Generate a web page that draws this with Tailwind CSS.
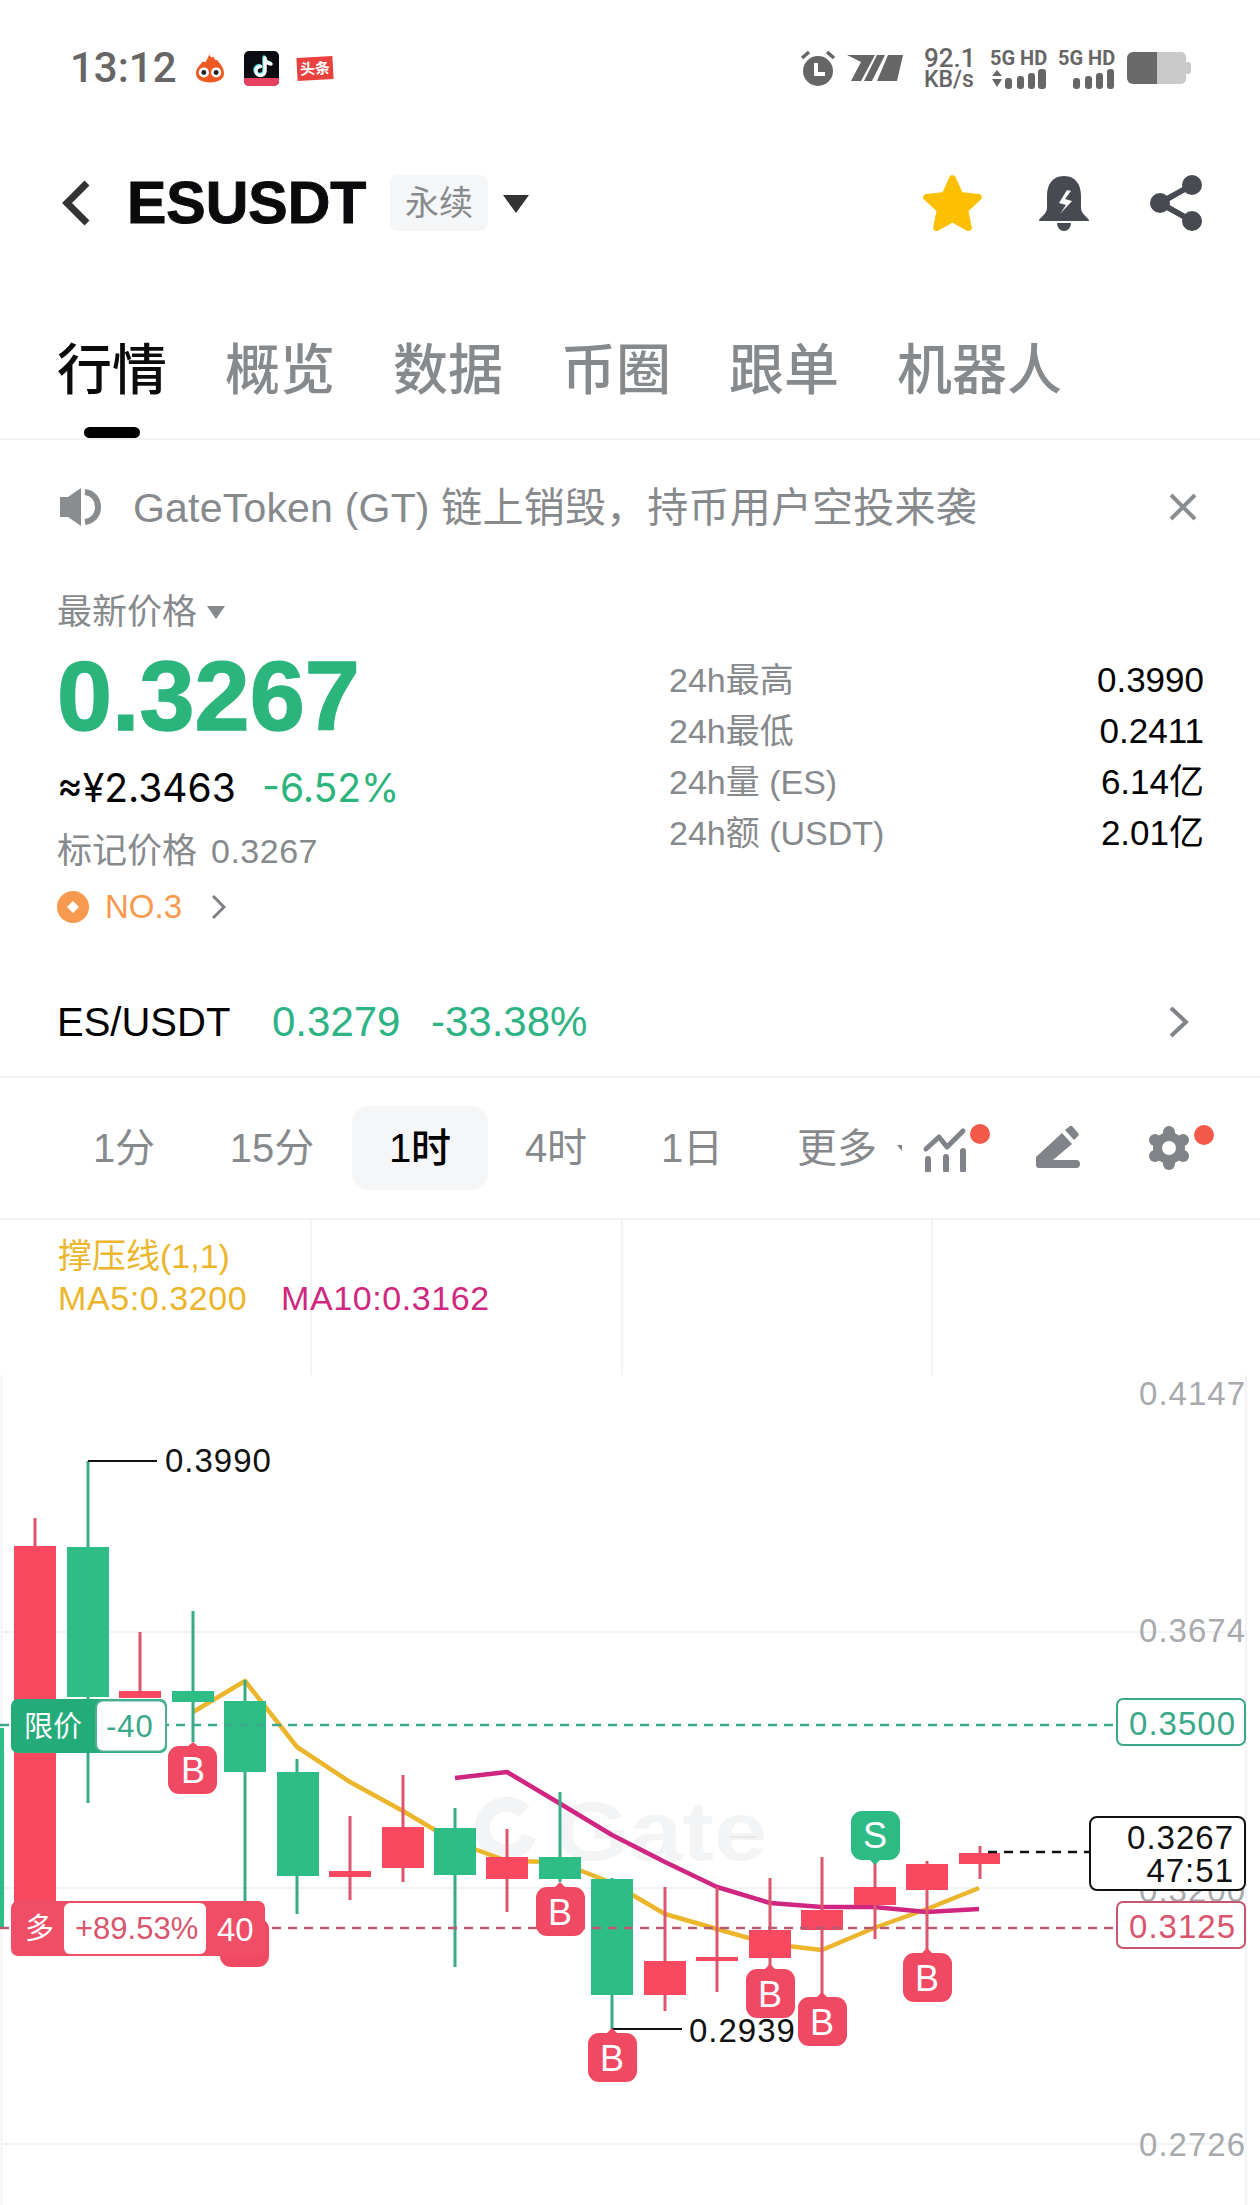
<!DOCTYPE html>
<html lang="zh-CN">
<head>
  <meta charset="UTF-8" />
  <meta name="viewport" content="width=device-width, initial-scale=1.0" />
  <title>ESUSDT 永续</title>
  <script src="https://cdn.jsdelivr.net/npm/@tailwindcss/browser@4"></script>
</head>
<body class="bg-white w-[1260px] h-[2205px] overflow-hidden font-['Liberation_Sans','Noto_Sans_CJK_SC',sans-serif]">
  <!-- status bar -->
  <div class="h-[136px] flex items-center text-[#666]">
    <span class="ml-[70px] w-[102px] text-[42px] leading-none font-medium font-['Roboto','Noto_Sans_CJK_SC',sans-serif] whitespace-nowrap">13:12</span>
    <svg class="ml-[24px] w-[28px] h-[29px]" viewBox="1 2 25 25">
      <path d="M13 2c1 3 2 3 4 2 0 2 1 3 3 3 3 4 6 7 6 12 0 5-5 8-12.500 8S1 24 1 19c0-6 4-7 6-11 1 1 2 1 3 0 1-2 2-4 3-6z" fill="#ef5a22"/>
      <circle cx="8" cy="18" r="4.500" fill="#fff"/><circle cx="19" cy="18" r="4.500" fill="#fff"/>
      <circle cx="8" cy="18" r="2.200" fill="#222"/><circle cx="19" cy="18" r="2.200" fill="#222"/>
    </svg>
    <svg class="ml-[20px] w-[35px] h-[35px]" viewBox="0 0 35 35">
      <rect width="35" height="35" rx="5" fill="#0b0b12"/>
      <path d="M0 27h35v3a5 5 0 0 1-5 5H5a5 5 0 0 1-5-5z" fill="#e8415f"/>
      <g fill="none" stroke-width="3.500" stroke-linecap="round">
        <path d="M20 6v13a4.500 4.500 0 1 1-4.500-4.500M20 7c1 3 3 4.500 6 5" stroke="#3ce0e0"/>
        <path d="M21 7v13a4.500 4.500 0 1 1-4.500-4.500M21 8c1 3 3 4.500 6 5" stroke="#fff"/>
      </g>
    </svg>
    <span class="ml-[18px] w-[36px] h-[23px] bg-[#e8413e] -rotate-3 text-white text-[15px] leading-[23px] font-bold text-center whitespace-nowrap">头条</span>

    <svg class="ml-[467px] w-[36px] h-[36px]" viewBox="0 0 36 36">
      <circle cx="18" cy="21" r="15" fill="#666"/>
      <path d="M2 8l7-6M27 2l7 6" stroke="#666" stroke-width="3.500"/>
      <path d="M16 13v11h9" fill="none" stroke="#fff" stroke-width="4"/>
    </svg>
    <svg class="ml-[11px] w-[56px] h-[26px]" viewBox="0 0 56 26">
      <path d="M0 0h28L14 26H4l10-19zM30 0h8L25 26h-8zM41 0h15l-6 26H30z" fill="#666"/>
    </svg>
    <div class="ml-[21px] w-[50px] flex flex-col font-medium font-['Roboto',sans-serif] whitespace-nowrap">
      <span class="text-[26px] leading-[23px]">92.1</span>
      <span class="text-[23px] leading-[20px]">KB/s</span>
    </div>
    <div class="ml-[16px] w-[57px] flex flex-col">
      <span class="text-[20px] leading-[20px] font-bold font-['Roboto',sans-serif] whitespace-nowrap">5G HD</span>
      <svg class="w-[57px] h-[20px] mt-[1px]" viewBox="0 0 57 20" fill="#666">
        <path d="M2 7l5-6 5 6zM2 10l5 8 5-8z"/>
        <rect x="15" y="9" width="7" height="11" rx="3"/><rect x="27" y="7" width="7" height="13" rx="3"/><rect x="38" y="4" width="7" height="16" rx="3"/><rect x="48" y="0" width="8" height="20" rx="3"/>
      </svg>
    </div>
    <div class="ml-[11px] w-[57px] flex flex-col">
      <span class="text-[20px] leading-[20px] font-bold font-['Roboto',sans-serif] whitespace-nowrap">5G HD</span>
      <svg class="w-[57px] h-[20px] mt-[1px]" viewBox="0 0 57 20" fill="#666">
        <rect x="15" y="9" width="7" height="11" rx="3"/><rect x="27" y="7" width="7" height="13" rx="3"/><rect x="38" y="4" width="7" height="16" rx="3"/><rect x="49" y="0" width="7" height="20" rx="3"/>
      </svg>
    </div>
    <svg class="ml-[12px] w-[64px] h-[32px]" viewBox="0 0 64 32">
      <path d="M30 0h24a5 5 0 0 1 5 5v22a5 5 0 0 1-5 5H30z" fill="#c9c9c9"/>
      <path d="M59 10h2a3 3 0 0 1 3 3v6a3 3 0 0 1-3 3h-2z" fill="#c9c9c9"/>
      <path d="M30 0H6a6 6 0 0 0-6 6v20a6 6 0 0 0 6 6h24z" fill="#6a6a6a"/>
    </svg>
  </div>

  <!-- header -->
  <div class="h-[134px] flex items-center">
    <svg class="ml-[62px] w-[28px] h-[46px]" viewBox="0 0 28 46">
      <path d="M25 3L5 23l20 20" fill="none" stroke="#333" stroke-width="7"/>
    </svg>
    <h1 class="ml-[37px] w-[240px] text-[59px] leading-none font-bold text-[#0b0b0d] whitespace-nowrap [-webkit-text-stroke:1px_#0b0b0d]">ESUSDT</h1>
    <span class="ml-[23px] w-[98px] h-[56px] rounded-lg bg-[#f5f6f7] text-[#888b8e] text-[34px] leading-[56px] text-center">永续</span>
    <svg class="ml-[15px] w-[26px] h-[19px]" viewBox="0 0 26 19"><path d="M0 1h26L13 19z" fill="#333"/></svg>
    <svg class="ml-[394px] w-[59px] h-[56px]" viewBox="3 3 54 51">
      <path d="M30 6l7 15.300 16.800 2-12.400 11.400 3.300 16.500L30 43l-14.700 8.200 3.300-16.500L6.200 23.300 23 21.300z" fill="#fcbf02" stroke="#fcbf02" stroke-width="6" stroke-linejoin="round"/>
    </svg>
    <svg class="ml-[57px] w-[50px] h-[55px]" viewBox="0 0 50 55">
      <path d="M25 0C13 0 8 9 8 20v12c0 5-5 8-8 12v1h50v-1c-3-4-8-7-8-12V20C42 9 37 0 25 0z" fill="#474a51"/>
      <path d="M18 47h14a7 8 0 0 1-14 0z" fill="#474a51"/>
      <path d="M28 14l-8 13 7 2-6 9 12-13-7-2 6-8z" fill="#fff"/>
    </svg>
    <svg class="ml-[60px] w-[54px] h-[56px]" viewBox="0 0 54 56" fill="#474a51">
      <path d="M43 10L11 28l32 18" fill="none" stroke="#474a51" stroke-width="6"/>
      <circle cx="43" cy="10" r="10"/><circle cx="11" cy="28" r="10"/><circle cx="43" cy="46" r="10"/>
    </svg>
  </div>

  <!-- tabs -->
  <nav class="relative h-[170px] border-b-2 border-[#f1f2f3] pl-[57px] pt-[66px] flex gap-[58px] text-[55px] leading-[68px] font-medium text-[#878a8d] whitespace-nowrap">
    <a class="relative text-[#0b0b0d]">行情<span class="absolute left-[27px] top-[91px] w-[56px] h-[11px] rounded-full bg-black"></span></a>
    <a>概览</a>
    <a>数据</a>
    <a>币圈</a>
    <a>跟单</a>
    <a>机器人</a>
  </nav>

  <!-- notice -->
  <div class="h-[134px] flex items-center text-[#878a8d]">
    <svg class="ml-[60px] w-[41px] h-[38px]" viewBox="0 0 41 38" fill="#8a8d90">
      <path d="M0 9h8L21 0v38L8 29H0z"/>
      <path d="M25 4c8 1 13 7 13 15s-5 14-13 15" fill="none" stroke="#8a8d90" stroke-width="6"/>
    </svg>
    <p class="ml-[32px] w-[861px] pt-[2px] text-[41px] leading-none tracking-[0.200px] whitespace-nowrap">GateToken (GT) 链上销毁，持币用户空投来袭</p>
    <svg class="ml-[175px] w-[28px] h-[28px]" viewBox="0 0 28 28"><path d="M2 2l24 24M26 2L2 26" stroke="#8a8d90" stroke-width="4"/></svg>
  </div>

  <!-- price -->
  <section class="h-[393px] pl-[57px] pr-[56px] flex">
    <div class="w-[612px] pt-[16px] flex flex-col">
      <div class="h-[44px] flex items-center text-[35px] text-[#878a8d]">
        最新价格
        <svg class="ml-[10px] w-[18px] h-[13px]" viewBox="0 0 18 13"><path d="M0 0h18L9 13z" fill="#878a8d"/></svg>
      </div>
      <div class="mt-[13px] h-[98px] text-[99px] leading-[98px] font-bold text-[#2bb57d] [-webkit-text-stroke:1.500px_#2bb57d]">0.3267</div>
      <div class="mt-[21px] h-[44px] flex items-center text-[39px] font-[Inter,sans-serif]">
        <span class="text-black w-[205px]">≈¥2.3463</span>
        <span class="text-[#2bb57d]">-6.52%</span>
      </div>
      <div class="mt-[19px] h-[44px] flex items-center text-[35px] text-[#878a8d]">
        标记价格
        <span class="ml-[14px] text-[34px] tracking-[0.500px]">0.3267</span>
      </div>
      <div class="mt-[14px] h-[40px] flex items-center">
        <svg class="w-[32px] h-[32px]" viewBox="0 0 32 32">
          <circle cx="16" cy="16" r="16" fill="#f79a50"/><path d="M16 10l6 6-6 6-6-6z" fill="#fff"/>
        </svg>
        <span class="ml-[16px] text-[33px] text-[#f79a50]">NO.3</span>
        <svg class="ml-[30px] w-[14px] h-[24px]" viewBox="0 0 14 24"><path d="M1 1l11 11L1 23" fill="none" stroke="#7d8084" stroke-width="3"/></svg>
      </div>
    </div>
    <dl class="flex-1 pt-[81px] text-[34px] whitespace-nowrap">
      <div class="h-[51px] flex items-center justify-between"><dt class="text-[#878a8d]">24h最高</dt><dd class="text-[35px] text-black">0.3990</dd></div>
      <div class="h-[51px] flex items-center justify-between"><dt class="text-[#878a8d]">24h最低</dt><dd class="text-[35px] text-black">0.2411</dd></div>
      <div class="h-[51px] flex items-center justify-between"><dt class="text-[#878a8d]">24h量 (ES)</dt><dd class="text-[35px] text-black">6.14亿</dd></div>
      <div class="h-[51px] flex items-center justify-between"><dt class="text-[#878a8d]">24h额 (USDT)</dt><dd class="text-[35px] text-black">2.01亿</dd></div>
    </dl>
  </section>

  <!-- pair row -->
  <div class="h-[111px] pl-[57px] flex items-center border-b-2 border-[#f1f2f3] whitespace-nowrap">
    <span class="w-[215px] text-[40px] text-black">ES/USDT</span>
    <span class="w-[159px] text-[42px] text-[#2eb384]">0.3279</span>
    <span class="w-[680px] text-[42px] text-[#2eb384]">-33.38%</span>
    <svg class="ml-[58px] w-[20px] h-[32px]" viewBox="0 0 20 32"><path d="M2 2l15 14L2 30" fill="none" stroke="#808387" stroke-width="4"/></svg>
  </div>

  <!-- interval tabs -->
  <div class="h-[142px] pl-[56px] flex items-center border-b-2 border-[#f1f2f3] text-[40px] text-[#878a8d] whitespace-nowrap">
    <span class="w-[136px] text-center">1分</span>
    <span class="ml-[12px] w-[136px] text-center">15分</span>
    <span class="ml-[12px] w-[136px] h-[84px] leading-[84px] rounded-2xl bg-[#f5f6f7] text-center font-medium text-black">1时</span>
    <span class="w-[136px] text-center">4时</span>
    <span class="w-[136px] text-center">1日</span>
    <span class="ml-[9px] w-[136px] text-center">更多</span>
    <svg class="ml-[-8px] w-[5px] h-[6px]" viewBox="0 0 5 6"><path d="M0 0h5L5 6z" fill="#808387"/></svg>
    <svg class="ml-[18px] w-[72px] h-[48px]" viewBox="0 0 72 48">
      <path d="M6 25l13-12 8 10L43 7" fill="none" stroke="#808387" stroke-width="5" stroke-linecap="round" stroke-linejoin="round"/>
      <path d="M8 35v11M26 33v13M43 27v19" stroke="#808387" stroke-width="6" stroke-linecap="round"/>
      <circle cx="60" cy="10" r="10" fill="#f45a4a"/>
    </svg>
    <svg class="ml-[44px] w-[44px] h-[44px]" viewBox="0 0 44 44" fill="#808387">
      <path d="M0 31L26 7l10 11-19 16h23a3.500 3.500 0 0 1 0 8H3a3 3 0 0 1-3-3z"/>
      <path d="M29 4l5-4a2 2 0 0 1 2 0l6 7a2 2 0 0 1 0 3l-4 4z"/>
    </svg>
    <svg class="ml-[68px] w-[68px] h-[46px]" viewBox="0 0 68 46">
      <g fill="#808387">
        <circle cx="21" cy="23" r="16"/>
        <circle cx="21" cy="7" r="6"/><circle cx="35" cy="15" r="6"/><circle cx="35" cy="31" r="6"/><circle cx="21" cy="39" r="6"/><circle cx="7" cy="31" r="6"/><circle cx="7" cy="15" r="6"/>
      </g>
      <circle cx="21" cy="23" r="7" fill="#fff"/>
      <circle cx="56" cy="10" r="10" fill="#f45a4a"/>
    </svg>
  </div>

  <!-- chart -->
  <section class="relative h-[985px]">
    <svg class="absolute inset-0 w-[1260px] h-[985px]" viewBox="0 1220 1260 985">
      <!-- grid -->
      <path d="M311 1220V1375M622 1220V1375M932 1220V1375M1.500 1375V2205M1246 1375V2205M3 1632H1246M3 1888H1246M3 2144H1246" fill="none" stroke="#f2f3f4" stroke-width="2"/>
      <g font-size="33" letter-spacing="1" fill="#a8aaad" text-anchor="end">
        <text x="1246" y="1405">0.4147</text>
        <text x="1246" y="1642">0.3674</text>
        <text x="1246" y="1902">0.3200</text>
        <text x="1246" y="2156">0.2726</text>
      </g>
      <!-- watermark -->
      <path d="M524 1812a24 24 0 1 0 5 24" fill="none" stroke="#f3f4f5" stroke-width="15"/>
      <text x="555" y="1860" font-size="84" font-weight="700" fill="#f3f4f5" textLength="212" lengthAdjust="spacingAndGlyphs">Gate</text>
      <path d="M730 1837H757" stroke="#ddd" stroke-width="1"/>
      <!-- moving averages -->
      <polyline points="193,1712 245,1681 297,1747 350,1782 403,1811 455,1842 507,1861 559,1862 612,1883 665,1914 717,1929 770,1944 822,1950 874,1928 927,1909 979,1888" fill="none" stroke="#ecb62c" stroke-width="4.500" stroke-linejoin="round"/>
      <polyline points="455,1778 507,1772 559,1803 612,1835 665,1862 717,1887 770,1903 822,1907 874,1907 927,1912 979,1909" fill="none" stroke="#cf2682" stroke-width="4.500" stroke-linejoin="round"/>
      <!-- wicks -->
      <path d="M35 1518V1546M140 1632V1691M350 1816V1900M403 1775V1882M507 1829V1912M665 1887V2011M717 1887V1992M770 1878V1969M822 1857V1997M875 1860V1939M927 1861V1953M980 1846V1879" stroke="#dc566d" stroke-width="3"/>
      <path d="M88 1461V1803M193 1611V1742M245 1680V1901M297 1759V1914M455 1808V1967M560 1792V1882M612 1878V2033" stroke="#3aaa88" stroke-width="3"/>
      <!-- bodies -->
      <g fill="#f84960">
        <rect x="14" y="1546" width="42" height="400"/>
        <rect x="119" y="1691" width="42" height="7"/>
        <rect x="329" y="1871" width="42" height="6"/>
        <rect x="382" y="1827" width="42" height="41"/>
        <rect x="486" y="1857" width="42" height="22"/>
        <rect x="644" y="1961" width="42" height="34"/>
        <rect x="696" y="1957" width="42" height="4"/>
        <rect x="749" y="1930" width="42" height="28"/>
        <rect x="801" y="1910" width="42" height="20"/>
        <rect x="854" y="1887" width="42" height="18"/>
        <rect x="906" y="1864" width="42" height="26"/>
        <rect x="959" y="1853" width="41" height="11"/>
      </g>
      <g fill="#2ebd85">
        <rect x="0" y="1728" width="4" height="199"/>
        <rect x="67" y="1547" width="42" height="150"/>
        <rect x="172" y="1691" width="42" height="11"/>
        <rect x="224" y="1701" width="42" height="71"/>
        <rect x="277" y="1772" width="42" height="104"/>
        <rect x="434" y="1828" width="42" height="47"/>
        <rect x="539" y="1857" width="42" height="22"/>
        <rect x="591" y="1879" width="42" height="116"/>
      </g>
      <!-- high / low marks -->
      <path d="M88 1461H157M612 2029H682" stroke="#111" stroke-width="2"/>
      <g font-size="33" letter-spacing="1" fill="#111">
        <text x="165" y="1472">0.3990</text>
        <text x="689" y="2042">0.2939</text>
      </g>
      <!-- dashed order lines -->
      <path d="M0 1725H1115" stroke="#3aa889" stroke-width="2.500" stroke-dasharray="9 7"/>
      <path d="M0 1928H1115" stroke="#b85a70" stroke-width="2.500" stroke-dasharray="9 7"/>
      <path d="M988 1852H1090" stroke="#111" stroke-width="2.500" stroke-dasharray="9 7"/>
      <!-- trade badges -->
      <g fill="#ef4963">
        <rect x="220" y="1918" width="49" height="49" rx="11"/>
        <path d="M187 1747l6-5 6 5z"/><rect x="168" y="1746" width="49" height="48" rx="11"/>
        <path d="M554 1888l6-6 6 6z"/><rect x="536" y="1887" width="49" height="49" rx="11"/>
        <path d="M606 2034l6-6 6 6z"/><rect x="588" y="2033" width="49" height="49" rx="11"/>
        <path d="M764 1970l6-6 6 6z"/><rect x="746" y="1969" width="49" height="49" rx="11"/>
        <path d="M816 1998l6-6 6 6z"/><rect x="798" y="1997" width="49" height="49" rx="11"/>
        <path d="M921 1954l6-6 6 6z"/><rect x="903" y="1953" width="49" height="49" rx="11"/>
      </g>
      <g fill="#2dba85">
        <path d="M869 1859l6 6 6-6z"/><rect x="851" y="1811" width="49" height="49" rx="11"/>
      </g>
      <g font-size="36" fill="#fff" text-anchor="middle">
        <text x="193" y="1783">B</text>
        <text x="560" y="1925">B</text>
        <text x="612" y="2071">B</text>
        <text x="770" y="2007">B</text>
        <text x="822" y="2035">B</text>
        <text x="927" y="1991">B</text>
        <text x="875" y="1848">S</text>
      </g>
      <!-- limit order tag -->
      <rect x="11" y="1699" width="156" height="54" rx="7" fill="#24ab7a"/>
      <rect x="96" y="1700.500" width="70" height="51" rx="7" fill="#fff" stroke="#4db093" stroke-width="2"/>
      <text x="24" y="1737" font-size="29" fill="#fff" font-family="'Noto Sans CJK SC'">限价</text>
      <text x="106" y="1737" font-size="31" letter-spacing="1" fill="#3aa889">-40</text>
      <!-- position tag -->
      <rect x="11" y="1901" width="254" height="55" rx="7" fill="#f04d66"/>
      <rect x="64" y="1903" width="142" height="51" rx="6" fill="#fff"/>
      <text x="25" y="1939" font-size="29" fill="#fff" font-family="'Noto Sans CJK SC'">多</text>
      <text x="75" y="1939" font-size="31" fill="#d9546c">+89.53%</text>
      <text x="217" y="1941" font-size="33" fill="#fff">40</text>
      <!-- price scale tags -->
      <rect x="1117" y="1699" width="128" height="46" rx="6" fill="#fff" stroke="#3aa889" stroke-width="2"/>
      <text x="1236" y="1735" font-size="33" letter-spacing="1" fill="#3aa889" text-anchor="end">0.3500</text>
      <rect x="1117" y="1902" width="128" height="46" rx="6" fill="#fff" stroke="#c9566e" stroke-width="2"/>
      <text x="1236" y="1938" font-size="33" letter-spacing="1" fill="#d9546c" text-anchor="end">0.3125</text>
      <rect x="1090" y="1817" width="155" height="73" rx="7" fill="#fff" stroke="#111" stroke-width="2"/>
      <g font-size="33" letter-spacing="1" fill="#111" text-anchor="end">
        <text x="1234" y="1849">0.3267</text>
        <text x="1234" y="1882">47:51</text>
      </g>
    </svg>
    <div class="relative pt-[15px] pl-[58px] text-[34px] leading-[42px] whitespace-nowrap text-[#ecb62c]">
      <div>撑压线(1,1)</div>
      <div class="flex tracking-[0.600px]">
        <span class="w-[223px]">MA5:0.3200</span>
        <span class="text-[#d0287f]">MA10:0.3162</span>
      </div>
    </div>
  </section>
</body>
</html>
